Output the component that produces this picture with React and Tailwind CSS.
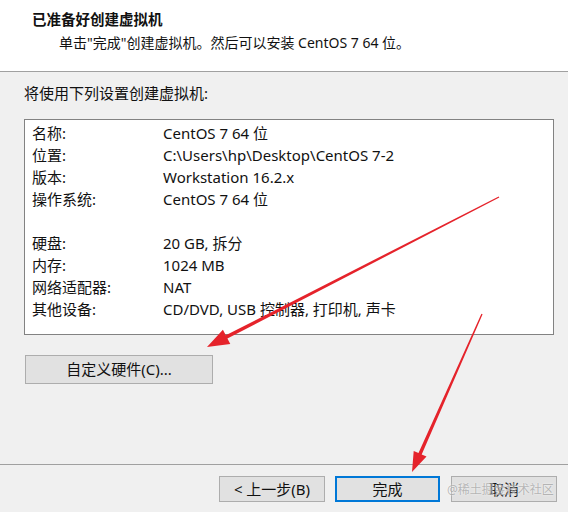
const font = {
  fontFamily: '"Noto Sans", "Noto Sans CJK SC", sans-serif',
};

const rowsA = [
  ["名称:", "CentOS 7 64 位"],
  ["位置:", "C:\\Users\\hp\\Desktop\\CentOS 7-2"],
  ["版本:", "Workstation 16.2.x"],
  ["操作系统:", "CentOS 7 64 位"],
];

const rowsB = [
  ["硬盘:", "20 GB, 拆分"],
  ["内存:", "1024 MB"],
  ["网络适配器:", "NAT"],
  ["其他设备:", "CD/DVD, USB 控制器, 打印机, 声卡"],
];

function Row({ label, value }) {
  return (
    <div className="flex h-[22px] items-center">
      <span className="w-[131px] shrink-0">{label}</span>
      <span className="whitespace-nowrap">{value}</span>
    </div>
  );
}

function Arrows() {
  return (
    <svg
      className="pointer-events-none absolute inset-0"
      width="568"
      height="512"
      viewBox="0 0 568 512"
    >
      <polygon
        fill="#e5232b"
        points="499.3,197.6 227.4,338.5 230.3,344.0 207,347 222.9,329.8 225.8,335.3 498.7,196.4"
      />
      <polygon
        fill="#e5232b"
        points="482.6,314.3 421.7,454.4 426.5,456.5 412,472 413.7,450.9 418.5,453.0 481.4,313.7"
      />
    </svg>
  );
}

export default function App() {
  return (
    <div
      className="relative flex h-[512px] w-[568px] flex-col overflow-hidden bg-[#f0f0f0] text-[15px] text-[#111]"
      style={font}
    >
      {/* Header */}
      <div className="h-[72px] shrink-0 border-b border-[#a0a0a0] bg-white pl-[32px] pt-[7px]">
        <div className="text-[14.5px] font-bold leading-[24px]">已准备好创建虚拟机</div>
        <div className="pl-[27px] text-[14px] leading-[24px]">
          单击"完成"创建虚拟机。然后可以安装 CentOS 7 64 位。
        </div>
      </div>

      {/* Body */}
      <div className="flex-1 px-[24px] pt-[10px]">
        <div className="leading-[22px]">将使用下列设置创建虚拟机:</div>

        <div className="mt-[15px] h-[216px] w-[530px] border border-[#828282] bg-white pb-[13px] pl-[7px] pt-[2px]">
          {rowsA.map(([l, v]) => (
            <Row key={l} label={l} value={v} />
          ))}
          <div className="h-[22px]" />
          {rowsB.map(([l, v]) => (
            <Row key={l} label={l} value={v} />
          ))}
        </div>

        <button className="ml-[1px] mt-[20px] flex h-[29px] w-[188px] items-center justify-center border border-[#adadad] bg-[#e1e1e1]">
          自定义硬件(C)...
        </button>
      </div>

      {/* Footer */}
      <div className="relative h-[48px] shrink-0 border-t border-[#a0a0a0]">
        <div className="flex pl-[219px] pt-[11px]">
          <button className="flex h-[26px] w-[106px] items-center justify-center border border-[#adadad] bg-[#e1e1e1]">
            &lt; 上一步(B)
          </button>
          <button className="ml-[10px] flex h-[26px] w-[105px] items-center justify-center border-2 border-[#0078d7] bg-[#e1e1e1]">
            完成
          </button>
          <button className="ml-[11px] flex h-[26px] w-[106px] items-center justify-center border border-[#adadad] bg-[#e1e1e1]">
            取消
          </button>
        </div>
        <div
          className="pointer-events-none absolute left-[447px] top-[15px] whitespace-nowrap text-[12px] leading-[20px] text-[#9a9a9a]/70"
          style={{ textShadow: "0 0 2px rgba(255,255,255,0.9)" }}
        >
          @稀土掘金技术社区
        </div>
      </div>

      <Arrows />
    </div>
  );
}
